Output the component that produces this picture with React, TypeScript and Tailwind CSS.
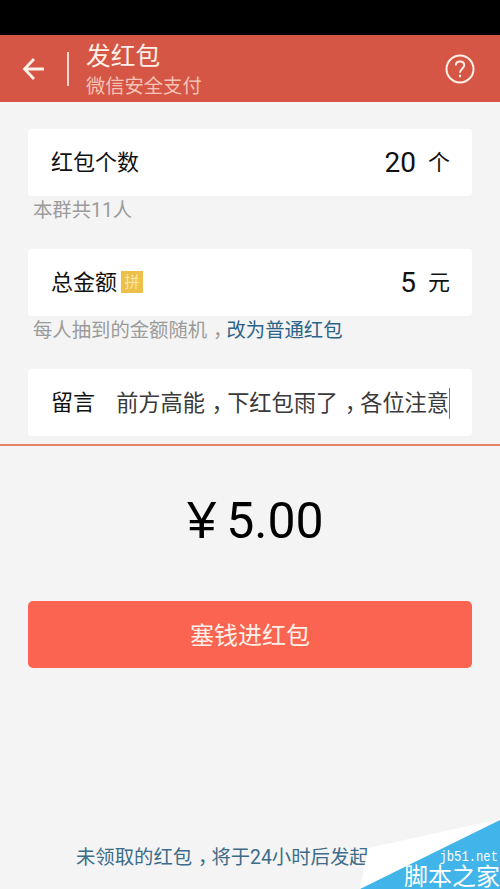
import React from 'react';

// Half-width comma centred in a full-width cell
const Comma = () => <span className="inline-block w-[1em] pl-[0.3em] whitespace-nowrap [font-feature-settings:'halt']">，</span>;

const Card = ({ children }: { children: React.ReactNode }) => (
    <div className="h-[67px] shrink-0 flex items-center bg-white rounded-[4px] pl-[23px] pr-[22px] pt-px text-[22px] leading-[30px] text-[#111]">
        {children}
    </div>
);

const Hint = ({ children }: { children: React.ReactNode }) => (
    <p className="h-[53px] pl-[5px] pt-[1px] text-[19.35px] leading-[28px] text-[#9b9b9b] whitespace-nowrap">{children}</p>
);

const Header = () => (
    <header className="h-[67px] flex items-center bg-[#d55645] text-[#fff0e8]">
        <svg className="ml-[22px] w-[23px] h-[24px]" viewBox="0 0 23 24" fill="none" stroke="currentColor" strokeWidth="2.8">
            <path d="M22 12H2.5M12 2L2.5 12l9.5 10" />
        </svg>
        <div className="ml-[22px] w-[2px] h-[34px] bg-[#fbd9d0]"></div>
        <div className="ml-[17px] flex-1 pt-[5px]">
            <h1 className="text-[24.7px] leading-[32px]">发红包</h1>
            <p className="text-[19.3px] leading-[28px] text-[#f6c2b6]">微信安全支付</p>
        </div>
        <svg className="mr-[25px] w-[30px] h-[30px]" viewBox="0 0 30 30" fill="none" stroke="currentColor" strokeWidth="2">
            <circle cx="15" cy="15" r="13.5" />
            <path d="M10.8 11.5C10.8 8.8 12.6 7.5 15 7.5s4.2 1.5 4.2 3.8c0 3.2-4.2 3.7-4.2 7.4" />
            <path d="M15 20.8v2.4" />
        </svg>
    </header>
);

const Watermark = () => (
    <div className="absolute right-0 bottom-0 w-[140px] h-[70px] text-white">
        <svg className="absolute inset-0 w-full h-full" viewBox="0 0 140 70">
            <path d="M8 29L140 0V70H0z" fill="#fff" />
            <path d="M0 70L140 1V70z" fill="#41b4e9" />
        </svg>
        <div className="relative h-full flex flex-col items-end pt-[32px]">
            <div className="pr-[2px] font-['Liberation_Mono'] text-[12.2px] leading-[12px] scale-y-125">jb51.net</div>
            <div className="mt-[2px] text-[24px] leading-[24px] whitespace-nowrap">脚本之家</div>
        </div>
    </div>
);

const App = () => {
    return (
        <div className="relative w-[500px] h-[889px] overflow-hidden flex flex-col bg-[#f4f4f4] font-[Roboto,'Noto_Sans_CJK_SC',sans-serif]">
            <div className="h-[35px] bg-black"></div>
            <Header />

            <main className="px-[28px] pt-[27px]">
                <Card>
                    <span className="flex-1">红包个数</span>
                    <span className="text-[28px] mr-[12px]">20</span>
                    <span>个</span>
                </Card>
                <Hint>本群共11人</Hint>

                <Card>
                    <span>总金额</span>
                    <span className="ml-[4px] mb-[2px] w-[22px] h-[22px] flex items-center justify-center bg-[#ecc04b] text-[#fae7a6] text-[15px] leading-none">拼</span>
                    <span className="flex-1"></span>
                    <span className="text-[28px] mr-[12px]">5</span>
                    <span>元</span>
                </Card>
                <Hint>
                    每人抽到的金额随机<Comma /><span className="text-[#2c6389]">改为普通红包</span>
                </Hint>

                <Card>
                    <span className="w-[66px]">留言</span>
                    <span className="whitespace-nowrap text-[22.2px] text-[#3a3a3a]">前方高能<Comma />下红包雨了<Comma />各位注意</span>
                    <span className="w-px h-[31px] shrink-0 bg-[#777]"></span>
                </Card>
            </main>

            <div className="mt-[8px] h-[2px] bg-[#e58368]"></div>

            <div className="mt-[44px] h-[62px] flex items-center justify-center gap-[10px] pl-[11px] text-[50px] text-black">
                <span className="mb-[2px] font-['Liberation_Sans'] text-[52px]">¥</span>
                <span>5.00</span>
            </div>

            <button className="mt-[49px] mx-[28px] h-[67px] rounded-[5px] pt-[2px] bg-[#fa6450] text-[24px] text-[#fff0ea]">塞钱进红包</button>

            <p className="mt-[176px] pl-[76px] text-[19.35px] leading-[28px] text-[#3c6c8a] whitespace-nowrap">
                未领取的红包<Comma />将于24小时后发起
            </p>

            <Watermark />
        </div>
    );
};

export default App;
